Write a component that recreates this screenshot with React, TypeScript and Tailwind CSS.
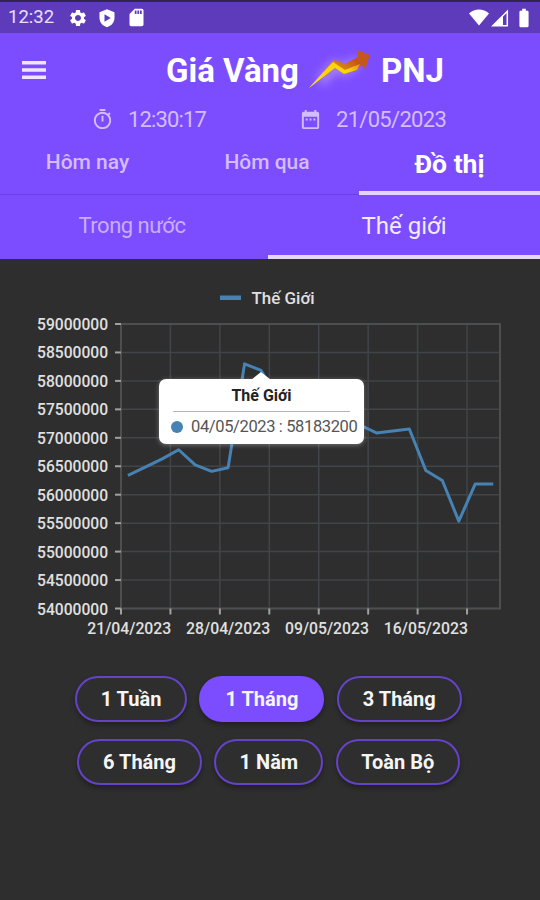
import { useState } from "react";
import clsx from "clsx";
import { MdBatteryFull, MdDateRange, MdOutlineTimer, MdSdCard, MdSettings } from "react-icons/md";

const MIN_PRICE = 54_000_000;
const MAX_PRICE = 59_000_000;
const PRICE_STEP = 500_000;

const PRICES = [
  56350000, 56490000, 56630000, 56790000, 56525000, 56410000, 56475000, 58300000,
  58183200, 57700000, 57650000, 57600000, 57550000, 57450000, 57225000, 57085000,
  57120000, 57155000, 56425000, 56250000, 55535000, 56190000, 56190000,
];

const DATE_LABELS = ["21/04/2023", "28/04/2023", "09/05/2023", "16/05/2023"];

const RANGES = [
  [
    { label: "1 Tuần", width: "w-[112px]" },
    { label: "1 Tháng", width: "w-[125px]" },
    { label: "3 Tháng", width: "w-[125px]" },
  ],
  [
    { label: "6 Tháng", width: "w-[125px]" },
    { label: "1 Năm", width: "w-[109px]" },
    { label: "Toàn Bộ", width: "w-[124px]" },
  ],
];

// plot area inside the chart svg
const PLOT = { left: 121, top: 44, right: 500, bottom: 328.5 };
const STEP_X = (PLOT.right - PLOT.left) / PRICES.length;

const xAt = (i: number) => PLOT.left + STEP_X * (i + 0.5);
const yAt = (price: number) =>
  PLOT.bottom - ((price - MIN_PRICE) / (MAX_PRICE - MIN_PRICE)) * (PLOT.bottom - PLOT.top);

function StatusBar() {
  return (
    <div className="flex h-[33px] items-center border-t-2 border-[#34254f] bg-[#5e3bbb] pl-2 pr-[5px] text-white">
      <span className="w-[47px] whitespace-nowrap pt-px text-[18.5px] text-[#e9e0fb]">12:32</span>
      <MdSettings className="ml-[13px]" size={20} />
      <svg className="ml-[9px]" width="20" height="20" viewBox="0 0 24 24" fill="currentColor">
        <path
          fillRule="evenodd"
          d="M12 1.5 3 5v7c0 5.2 3.8 9.6 9 11 5.2-1.4 9-5.8 9-11V5l-9-3.5ZM9 7.5v9l7.5-4.5L9 7.5Z"
        />
      </svg>
      <MdSdCard className="ml-[9px]" size={21} />
      <div className="ml-auto flex items-center">
        <svg width="20" height="17" viewBox="0 0 20 17" fill="currentColor">
          <path d="M0 4.5C5.5-.8 14.5-.8 20 4.5L10 16.5 0 4.5Z" />
        </svg>
        <svg className="ml-0.5" width="18" height="18" viewBox="0 0 18 18" fill="none" stroke="currentColor" strokeWidth="1.5">
          <path d="M12 6.5V17H1.5L12 6.5Z" fill="currentColor" stroke="none" />
          <path d="M1.8 16.7 16.3 2.2v14.5H1.8Z" />
        </svg>
        <MdBatteryFull className="ml-1" size={22} />
      </div>
    </div>
  );
}

function TrendArrow() {
  return (
    <svg className="overflow-visible" width="64" height="42" viewBox="0 0 64 42">
      <defs>
        <linearGradient id="trend" x1="0" y1="1" x2="1" y2="0">
          <stop offset="0" stopColor="#f3cf80" />
          <stop offset=".4" stopColor="#f5be10" />
          <stop offset=".65" stopColor="#d28a1c" />
          <stop offset="1" stopColor="#c94b13" />
        </linearGradient>
        <linearGradient id="trend-edge" gradientUnits="userSpaceOnUse" x1="0" y1="38" x2="54" y2="14">
          <stop offset="0" stopColor="#f3cf80" />
          <stop offset=".35" stopColor="#fbd50a" />
          <stop offset=".75" stopColor="#fbd50a" />
          <stop offset="1" stopColor="#e08a14" />
        </linearGradient>
        <filter id="glow" x="-30%" y="-60%" width="160%" height="220%">
          <feGaussianBlur stdDeviation="5" />
        </filter>
      </defs>
      <path d="M12 32 27 16 37 20 50 11" stroke="#dcc0f0" strokeWidth="11" fill="none" opacity=".45" filter="url(#glow)" />
      <path d="M1 38 26 10 37 14 50 7 49 0 62 5 57 19 53 15 49 20 36 24 27 18Z" fill="#c4571a" />
      <path d="M1 38 26 10 37 14 49 8 47 18 36 22 27 17Z" fill="url(#trend)" />
      <path d="M1 38 25 12 28 14 37 20 52 14 49 20 36 24 27 18Z" fill="url(#trend-edge)" />
    </svg>
  );
}

function Header() {
  return (
    <header>
      <div className="flex h-[73px] items-center pl-[22px]">
        <svg width="24" height="18" viewBox="0 0 24 18" fill="#efe6fd">
          <path d="M0 0h24v3.5H0zM0 7.2h24v3.5H0zM0 14.4h24v3.5H0z" />
        </svg>
        <h1 className="ml-[120px] flex items-center whitespace-nowrap pt-0.5 text-[33px] font-bold text-white">
          <span className="w-[133px]">Giá Vàng</span>
          <span className="ml-[9px] mr-[9px]">
            <TrendArrow />
          </span>
          <span>PNJ</span>
        </h1>
      </div>
      <div className="flex h-[26px] items-center pl-[91px] text-[22px] text-[#d4bdff]">
        <MdOutlineTimer size={23} />
        <span className="ml-3.5 w-[171px] tracking-[-0.85px]">12:30:17</span>
        <MdDateRange size={23} />
        <span className="ml-3.5 tracking-[-0.7px]">21/05/2023</span>
      </div>
    </header>
  );
}

function Tabs() {
  return (
    <nav>
      <div className="grid h-[63px] grid-cols-[175px_184px_181px] border-b border-[#6d42e5] text-[21px] font-medium text-[#d4bdff]">
        <button className="pb-px">Hôm nay</button>
        <button className="pb-px">Hôm qua</button>
        <button className="h-[63px] border-b-4 border-[#e4d5ff] pt-1 text-[26.5px] font-bold text-white">
          Đồ thị
        </button>
      </div>
      <div className="grid h-[64px] grid-cols-[268px_272px] text-[22px] text-[#c9adff]">
        <button className="pb-1 pr-1 tracking-[-0.5px]">Trong nước</button>
        <button className="border-b-4 border-[#e4d8f4] pt-0.5 text-[24px] text-[#f3ebff]">Thế giới</button>
      </div>
    </nav>
  );
}

function PriceChart() {
  const rows = Array.from(
    { length: (MAX_PRICE - MIN_PRICE) / PRICE_STEP + 1 },
    (_, i) => MAX_PRICE - i * PRICE_STEP,
  );
  const cols = Array.from({ length: 8 }, (_, i) => PLOT.left + STEP_X * 3 * i);
  const line = PRICES.map((p, i) => `${xAt(i)},${yAt(p)}`).join(" ");

  return (
    <div className="relative">
      <svg className="block" width="540" height="362" viewBox="0 0 540 362">
        <g stroke="#414549" strokeWidth="1.5">
          {rows.map((p) => (
            <line key={p} x1={PLOT.left} x2={PLOT.right} y1={yAt(p)} y2={yAt(p)} />
          ))}
          {cols.map((x) => (
            <line key={x} x1={x} x2={x} y1={PLOT.top} y2={PLOT.bottom} />
          ))}
        </g>
        <rect
          x={PLOT.left}
          y={PLOT.top}
          width={PLOT.right - PLOT.left}
          height={PLOT.bottom - PLOT.top}
          fill="none"
          stroke="#4d4e4f"
          strokeWidth="2"
        />
        <g stroke="#a0a0a0" strokeWidth="2">
          {rows.map((p) => (
            <line key={p} x1={PLOT.left - 6} x2={PLOT.left} y1={yAt(p)} y2={yAt(p)} />
          ))}
          {cols.map((x) => (
            <line key={x} x1={x} x2={x} y1={PLOT.bottom} y2={PLOT.bottom + 6} />
          ))}
        </g>
        <g fill="#e0e0e0" fontSize="16" fontWeight="500">
          {rows.map((p) => (
            <text key={p} x="37" y={yAt(p) + 6} textLength="71" lengthAdjust="spacingAndGlyphs">
              {p}
            </text>
          ))}
          {DATE_LABELS.map((label, i) => (
            <text
              key={label}
              x={xAt(i * 6) - 42}
              y="354"
              textLength="84"
              lengthAdjust="spacingAndGlyphs"
            >
              {label}
            </text>
          ))}
          <text x="251.5" y="24" fontSize="17" textLength="63" lengthAdjust="spacingAndGlyphs">
            Thế Giới
          </text>
        </g>
        <rect x="220" y="15.5" width="21" height="4.5" fill="#4682b4" />
        <polyline
          points={line}
          fill="none"
          stroke="#4682b4"
          strokeWidth="3"
          strokeLinejoin="round"
          strokeLinecap="square"
        />
      </svg>

      <div className="absolute left-[159px] top-[99px] h-[65px] w-[205px] rounded-[7px] bg-white px-3 pt-1.5 shadow-[0_1px_5px_rgba(255,255,255,0.35)]">
        <svg className="absolute -top-[7px] left-[92px]" width="20" height="8" viewBox="0 0 20 8">
          <path d="M0 8 10 0 20 8Z" fill="#fff" />
        </svg>
        <p className="pt-px text-center text-[16px] font-bold leading-5 text-[#222]">Thế Giới</p>
        <div className="mx-0.5 mt-[5px] h-px bg-[#b5b5b5]" />
        <div className="mt-[5px] flex items-center whitespace-nowrap text-[16.5px] leading-5 tracking-[-0.37px] text-[#555]">
          <span className="mr-2 size-3 shrink-0 rounded-full bg-[#4682b4]" />
          04/05/2023 : 58183200
        </div>
      </div>
    </div>
  );
}

export default function App() {
  const [range, setRange] = useState("1 Tháng");

  return (
    <main className="h-[900px] w-[540px] overflow-hidden bg-[#2e2e2e] font-['Roboto',sans-serif]">
      <StatusBar />
      <div className="bg-[#7c4dff]">
        <Header />
        <Tabs />
      </div>
      <div className="pt-[21px]">
        <PriceChart />
      </div>
      <div className="mt-[34px] flex flex-col gap-[17px]">
        {RANGES.map((row, i) => (
          <div key={i} className={clsx("flex gap-[12.4px]", i === 0 ? "pl-[75px]" : "pl-[77px]")}>
            {row.map(({ label, width }) => (
              <button
                key={label}
                onClick={() => setRange(label)}
                className={clsx(
                  "h-[46px] rounded-full border-2 text-[20px] font-bold text-[#f5f5f5] shadow-[0_3px_5px_rgba(0,0,0,0.3)]",
                  width,
                  range === label ? "border-[#7c4dff] bg-[#7c4dff]" : "border-[#6543c8] bg-[#2e2e2e]",
                )}
              >
                {label}
              </button>
            ))}
          </div>
        ))}
      </div>
    </main>
  );
}
